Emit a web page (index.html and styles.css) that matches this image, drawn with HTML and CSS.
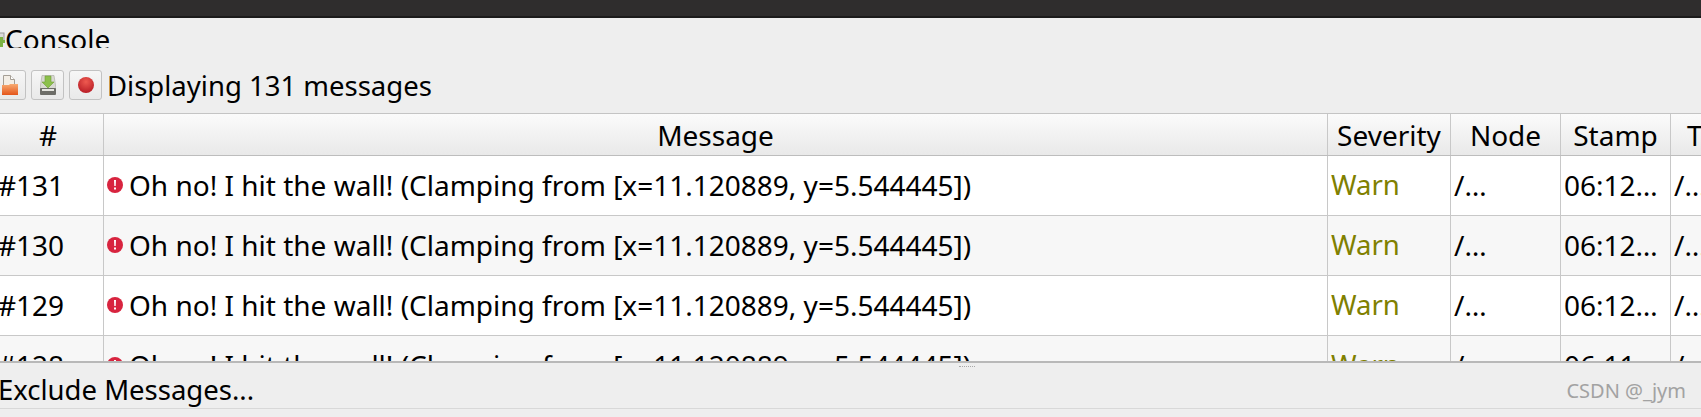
FILE: index.html
```html
<!DOCTYPE html>
<html lang="en">
<head>
    <meta charset="UTF-8">
    <meta name="viewport" content="width=device-width, initial-scale=1.0">
    <title>Console</title>
    <link rel="stylesheet" href="styles.css">
</head>
<body>
    <div class="titlebar"></div>

    <div class="panel">
        <div class="dock-title">
            <svg class="dock-icon" width="12" height="16" viewBox="0 0 12 16">
                <rect x="1" y="1" width="10" height="9" fill="#dcdcdc" stroke="#999"/>
                <path d="M7 5h3v3h2v3h-2v4H7v-4H4V8h3z" fill="#7cb342"/>
            </svg>
            <span>Console</span>
        </div>

        <div class="toolbar">
            <button class="tool-btn">
                <svg width="16" height="20" viewBox="0 0 16 20">
                    <defs>
                        <linearGradient id="folder" x1="0" y1="0" x2="0" y2="1">
                            <stop offset="0" stop-color="#f8ab72"/>
                            <stop offset="1" stop-color="#e4551a"/>
                        </linearGradient>
                    </defs>
                    <path d="M1.500.5h7l4 4v8h-11z" fill="#f3eee6" stroke="#a59f96"/>
                    <path d="M8.500.5v4h4" fill="#fff" stroke="#a59f96"/>
                    <path d="M0 10h7l1-1h8v11H0z" fill="url(#folder)"/>
                </svg>
            </button>
            <button class="tool-btn">
                <svg width="16" height="20" viewBox="0 0 16 20">
                    <path d="M2 .5h12l2 13H0z" fill="#d9d9d2" stroke="#a8a8a0" stroke-width=".6"/>
                    <rect y="13" width="16" height="7" rx="1" fill="#6d6d68"/>
                    <rect x="2" y="14" width="12" height="2" fill="#e6e6e0"/>
                    <path d="M5 1h6v6h3l-6 6-6-6h3z" fill="#8cc04b" stroke="#6f9e35" stroke-width=".6"/>
                </svg>
            </button>
            <button class="tool-btn">
                <svg width="16" height="16" viewBox="0 0 16 16">
                    <defs>
                        <radialGradient id="rec" cx="50%" cy="30%" r="70%">
                            <stop offset="0" stop-color="#ef5a50"/>
                            <stop offset="1" stop-color="#b81d26"/>
                        </radialGradient>
                    </defs>
                    <circle cx="8" cy="8" r="8" fill="url(#rec)"/>
                </svg>
            </button>
            <span class="count">Displaying 131 messages</span>
        </div>

        <div class="table">
            <div class="row head">
                <div class="cell">#</div>
                <div class="cell">Message</div>
                <div class="cell">Severity</div>
                <div class="cell">Node</div>
                <div class="cell">Stamp</div>
                <div class="cell topics">T</div>
            </div>
            <div class="row">
                <div class="cell">#131</div>
                <div class="cell msg">
                    <svg class="err" width="16" height="16" viewBox="0 0 16 16"><circle cx="8" cy="8" r="8" fill="#d8243f"/><path d="M7 3h2l-.3 6H7.300zM7 10.500h2v2H7z" fill="#fff"/></svg>
                    Oh no! I hit the wall! (Clamping from [x=11.120889, y=5.544445])
                </div>
                <div class="cell warn">Warn</div>
                <div class="cell">/…</div>
                <div class="cell">06:12…</div>
                <div class="cell">/…</div>
            </div>
            <div class="row">
                <div class="cell">#130</div>
                <div class="cell msg">
                    <svg class="err" width="16" height="16" viewBox="0 0 16 16"><circle cx="8" cy="8" r="8" fill="#d8243f"/><path d="M7 3h2l-.3 6H7.300zM7 10.500h2v2H7z" fill="#fff"/></svg>
                    Oh no! I hit the wall! (Clamping from [x=11.120889, y=5.544445])
                </div>
                <div class="cell warn">Warn</div>
                <div class="cell">/…</div>
                <div class="cell">06:12…</div>
                <div class="cell">/…</div>
            </div>
            <div class="row">
                <div class="cell">#129</div>
                <div class="cell msg">
                    <svg class="err" width="16" height="16" viewBox="0 0 16 16"><circle cx="8" cy="8" r="8" fill="#d8243f"/><path d="M7 3h2l-.3 6H7.300zM7 10.500h2v2H7z" fill="#fff"/></svg>
                    Oh no! I hit the wall! (Clamping from [x=11.120889, y=5.544445])
                </div>
                <div class="cell warn">Warn</div>
                <div class="cell">/…</div>
                <div class="cell">06:12…</div>
                <div class="cell">/…</div>
            </div>
            <div class="row">
                <div class="cell">#128</div>
                <div class="cell msg">
                    <svg class="err" width="16" height="16" viewBox="0 0 16 16"><circle cx="8" cy="8" r="8" fill="#d8243f"/><path d="M7 3h2l-.3 6H7.300zM7 10.500h2v2H7z" fill="#fff"/></svg>
                    Oh no! I hit the wall! (Clamping from [x=11.120889, y=5.544445])
                </div>
                <div class="cell warn">Warn</div>
                <div class="cell">/…</div>
                <div class="cell">06:11…</div>
                <div class="cell">/…</div>
            </div>
        </div>

        <div class="footer">
            <span class="grip"></span>
            <span class="exclude">Exclude Messages...</span>
            <span class="mark">CSDN @_jym</span>
        </div>
    </div>
</body>
</html>
```

FILE: styles.css
```css
html, body {
    margin: 0;
    padding: 0;
    height: 417px;
    overflow: hidden;
}
body {
    font-family: "Noto Sans", sans-serif;
    font-size: 28px;
    color: #000;
    background: #eeeeee;
}
.titlebar {
    height: 16px;
    background: #2f2d2d;
    border-bottom: 2px solid #1c1b1b;
}
.panel {
    margin-left: -7px;
    width: 1708px;
    position: relative;
}
.dock-title {
    height: 30px;
    display: flex;
    align-items: flex-start;
    overflow: hidden;
    line-height: 42px;
}
.dock-icon {
    margin-top: 14px;
}
.toolbar {
    height: 65px;
    display: flex;
    align-items: flex-start;
    gap: 5px;
    padding-top: 22px;
    box-sizing: border-box;
}
.tool-btn {
    width: 33px;
    height: 30px;
    padding: 0;
    display: flex;
    align-items: center;
    justify-content: center;
    border: 1px solid #c2c2c2;
    border-radius: 3px;
    background: linear-gradient(#f6f6f6, #e9e9e9);
}
.count {
    line-height: 32px;
    font-size: 27.500px;
}
.table {
    height: 248px;
    overflow: hidden;
    border-top: 1px solid #c4c4c4;
    box-sizing: border-box;
}
.row {
    display: grid;
    grid-template-columns: 111px 1224px 123px 110px 110px 1fr;
    height: 60px;
    background: #fff;
    border-bottom: 1px solid #c8c8c8;
    box-sizing: border-box;
}
.row:nth-child(odd) {
    background: #f7f7f7;
}
.row.head {
    height: 42px;
    background: linear-gradient(#fbfbfb, #e9e9e9);
    border-bottom: 1px solid #bdbdbd;
}
.cell {
    display: flex;
    align-items: center;
    padding: 0 0 2px 3px;
    border-right: 1px solid #c8c8c8;
    white-space: nowrap;
    overflow: hidden;
}
.cell:first-child {
    padding-left: 5px;
}
.cell:last-child {
    border-right: none;
}
.head .cell {
    justify-content: center;
    padding: 0;
}
.head .topics {
    justify-content: flex-start;
    padding-left: 16px;
}
.msg {
    gap: 6px;
}
.err {
    flex: none;
}
.warn {
    color: #808000;
    font-size: 27.500px;
}
.footer {
    height: 48px;
    display: flex;
    align-items: center;
    justify-content: space-between;
    padding: 7px 15px 0 5px;
    border-top: 2px solid #b8b8b8;
    border-bottom: 1px solid #d8d8d8;
    box-sizing: border-box;
}
.exclude {
    font-size: 27.500px;
}
.grip {
    position: absolute;
    left: 966px;
    top: 348px;
    width: 16px;
    border-top: 1px dotted #a8a8a8;
}
.mark {
    font-size: 20px;
    color: #a2a2a2;
    margin-top: 3px;
}
```
